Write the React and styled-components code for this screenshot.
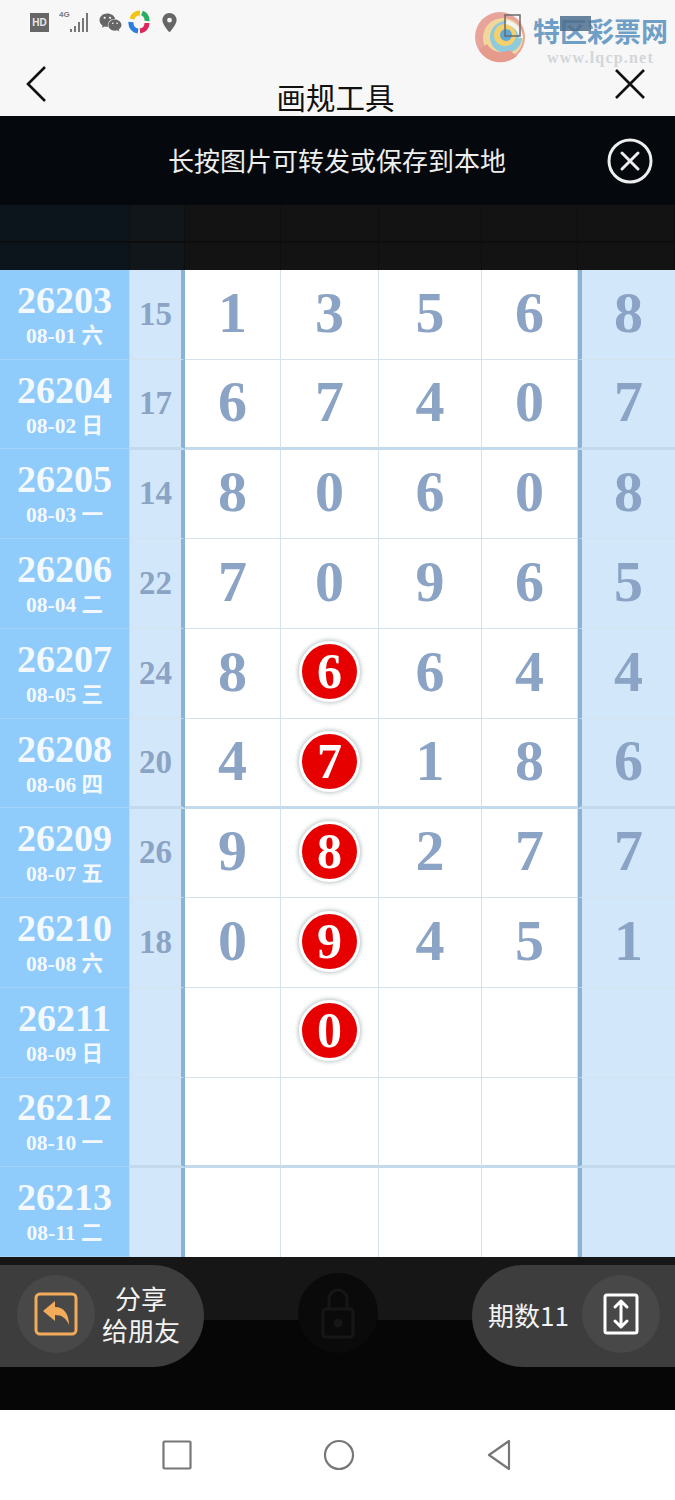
import styled, { createGlobalStyle } from "styled-components";
import { FaWeixin } from "react-icons/fa";
import { FaLocationDot } from "react-icons/fa6";

const GlobalStyle = createGlobalStyle`
  body {
    margin: 0;
    background: #fff;
    font-family: "Noto Sans CJK SC", "Noto Sans", sans-serif;
  }
`;

const rows = [
  { id: "26203", date: "08-01 六", sum: 15, nums: [1, 3, 5, 6, 8] },
  { id: "26204", date: "08-02 日", sum: 17, nums: [6, 7, 4, 0, 7], thick: true },
  { id: "26205", date: "08-03 一", sum: 14, nums: [8, 0, 6, 0, 8] },
  { id: "26206", date: "08-04 二", sum: 22, nums: [7, 0, 9, 6, 5] },
  { id: "26207", date: "08-05 三", sum: 24, nums: [8, 6, 6, 4, 4], hit: true },
  { id: "26208", date: "08-06 四", sum: 20, nums: [4, 7, 1, 8, 6], hit: true, thick: true },
  { id: "26209", date: "08-07 五", sum: 26, nums: [9, 8, 2, 7, 7], hit: true },
  { id: "26210", date: "08-08 六", sum: 18, nums: [0, 9, 4, 5, 1], hit: true },
  { id: "26211", date: "08-09 日", nums: ["", 0, "", "", ""], hit: true },
  { id: "26212", date: "08-10 一", nums: ["", "", "", "", ""], thick: true },
  { id: "26213", date: "08-11 二", nums: ["", "", "", "", ""], last: true },
];

const COLUMNS = "130px 55px 96px 98px 103px 96px 97px";

const Page = styled.div`
  position: relative;
  width: 675px;
  height: 1500px;
  display: flex;
  flex-direction: column;
  overflow: hidden;
`;

const TopBar = styled.header`
  height: 116px;
  background: #f7f7f7;
  display: flex;
  flex-direction: column;
`;

const StatusBar = styled.div`
  height: 44px;
  padding-left: 30px;
  display: flex;
  align-items: center;
  gap: 10px;
  color: #666;
`;

const HdBadge = styled.span`
  width: 19px;
  height: 19px;
  background: #666;
  color: #e8e8e8;
  font: 700 10px "Liberation Sans", sans-serif;
  display: flex;
  align-items: center;
  justify-content: center;
`;

const NavRow = styled.div`
  flex: 1;
  padding: 0 29px 0 25px;
  display: grid;
  grid-template-columns: 1fr auto 1fr;
  align-items: start;
`;

const BackIcon = styled.svg`
  width: 22px;
  height: 36px;
  margin-top: 22px;
`;

const CloseIcon = styled.svg`
  width: 32px;
  height: 32px;
  margin-top: 24px;
  justify-self: end;
`;

const Title = styled.h1`
  margin: 34px 0 0;
  font-size: 29.5px;
  line-height: 36px;
  font-weight: 400;
  color: #111;
`;

const AppIconSvg = styled.svg`
  width: 22px;
  height: 24px;
  margin-left: -4px;
`;

const Watermark = styled.div`
  position: absolute;
  top: 10px;
  left: 473px;
  display: flex;
  align-items: flex-start;
  gap: 6px;
`;

const WatermarkText = styled.div`
  position: relative;
  margin-top: 4px;
  display: flex;
  flex-direction: column;
  align-items: center;
`;

const WatermarkName = styled.span`
  position: relative;
  font-size: 27px;
  line-height: 34px;
  font-weight: 700;
  color: #6f9fc6;
  white-space: nowrap;
`;

const FaintBattery = styled.span`
  position: absolute;
  top: 2px;
  left: 27px;
  width: 31px;
  height: 15px;
  background: #4d6f8e;
  opacity: 0.85;
`;

const WatermarkUrl = styled.span`
  font: 700 16px/20px "Liberation Serif", serif;
  letter-spacing: 1.2px;
  color: #d2d6da;
`;

const TipBar = styled.div`
  height: 89px;
  background: #05090d;
  padding: 0 22px 0 168px;
  display: flex;
  align-items: center;
  justify-content: space-between;
  color: #eee;
`;

const TipText = styled.span`
  font-size: 26px;
  white-space: nowrap;
  margin-top: -2px;
`;

const DimHeader = styled.div`
  height: 65px;
  display: grid;
  grid-template-columns: ${COLUMNS};
`;

const DimCell = styled.div`
  background: ${(p) => p.$bg || "#131313"};
  border-right: 1px solid #0e0e0e;
  background-image: linear-gradient(transparent 36px, #0d0d0d 36px, #0d0d0d 38px, transparent 38px);
`;

const Table = styled.div`
  height: 987px;
  display: flex;
  flex-direction: column;
  background: #fff;
`;

const Row = styled.div`
  flex: 1;
  min-height: 0;
  display: grid;
  grid-template-columns: ${COLUMNS};
  position: ${(p) => (p.$thick ? "relative" : "static")};
  z-index: ${(p) => (p.$thick ? 1 : "auto")};
`;

const DateCell = styled.div`
  background: #8fcbfb;
  border-right: 1px solid #b9dcf8;
  border-bottom: 1px solid #a4d4fa;
  color: #f4f9fe;
  display: flex;
  flex-direction: column;
  align-items: center;
  justify-content: center;
`;

const Issue = styled.span`
  font: 700 38px/38px "Liberation Serif", serif;
`;

const DateText = styled.span`
  font: 700 21.5px/24px "Liberation Serif", "Noto Sans CJK SC", serif;
  margin-top: 5px;
`;

const Cell = styled.div`
  display: flex;
  align-items: center;
  justify-content: center;
  box-sizing: border-box;
  padding-bottom: 3px;
  color: #8ba3c4;
  font: 700 58px/1 "Liberation Serif", serif;
  background: ${(p) => (p.$shade ? "#d2e7fa" : "#fff")};
  border-bottom: ${(p) => (p.$last ? "0" : p.$thick ? "2px solid #c3d9ec" : "1px solid #d4e2ee")};
  box-shadow: ${(p) => (p.$thick ? "0 1px 0 #c3d9ec" : "none")};
  border-right: ${(p) => (p.$ruleRight ? "4px solid #8ab2d4" : p.$shade ? "0" : "1px solid #d4e2ee")};
  border-left: ${(p) => (p.$ruleLeft ? "4px solid #8ab2d4" : "0")};
`;

const SumCell = styled(Cell)`
  font-size: 33px;
  padding-bottom: 0;
`;

const Ball = styled.span`
  width: 55px;
  height: 55px;
  border-radius: 50%;
  background: #e60000;
  color: #fff;
  border: 3px solid #fff;
  box-shadow: 0 0 4px 1px rgba(70, 100, 100, 0.4);
  display: flex;
  align-items: center;
  justify-content: center;
  font-size: 50px;
  line-height: 55px;
`;

const BottomBar = styled.div`
  height: 153px;
  padding-top: 8px;
  box-sizing: border-box;
  background: linear-gradient(#161616 63px, #060606 63px);
  display: flex;
  justify-content: space-between;
  align-items: flex-start;
`;

const Pill = styled.div`
  height: 102px;
  width: ${(p) => p.$width}px;
  box-sizing: border-box;
  background: #3d3d3d;
  color: #f2f2f2;
  display: flex;
  align-items: center;
  border-radius: ${(p) => (p.$side === "left" ? "0 51px 51px 0" : "51px 0 0 51px")};
  padding: 0 0 4px ${(p) => (p.$side === "left" ? "17px" : "16px")};
`;

const IconCircle = styled.div`
  width: 78px;
  height: 78px;
  border-radius: 50%;
  background: #484848;
  flex: none;
  display: flex;
  align-items: center;
  justify-content: center;
`;

const ShareLabel = styled.div`
  margin-left: 7px;
  font-size: 26px;
  line-height: 32px;
  text-align: center;
`;

const CountLabel = styled.div`
  font-size: 26px;
  margin-right: 13px;
  white-space: nowrap;
`;

const LockCircle = styled.div`
  width: 80px;
  height: 80px;
  margin-top: 8px;
  border-radius: 50%;
  background: #0a0a0a;
  display: flex;
  align-items: center;
  justify-content: center;
`;

const NavBar = styled.nav`
  height: 90px;
  background: #fff;
  display: flex;
  align-items: center;
  justify-content: center;
  gap: 131px;
  padding-right: 2px;
`;

function Logo() {
  return (
    <svg width="54" height="54" viewBox="0 0 54 54">
      <circle cx="27" cy="27" r="25" fill="#e8a49a" />
      <circle cx="30" cy="28" r="20" fill="#f1d79c" />
      <circle cx="33" cy="27" r="16" fill="#8ecbdc" />
      <circle cx="32" cy="25" r="11" fill="#f4cf6c" />
      <circle cx="33" cy="25" r="6" fill="#5fa8d6" />
      <path d="M6 40 A25 25 0 0 0 44 46 L36 40 A16 16 0 0 1 14 34 Z" fill="#e59a8c" />
      <path d="M34 10 A20 20 0 0 1 50 28 L46 28 A16 16 0 0 0 32 14 Z" fill="#f4f4f4" />
      <rect x="32" y="5" width="15" height="21" fill="none" stroke="#6b6b6b" strokeWidth="1.5" />
    </svg>
  );
}

function SignalIcon() {
  return (
    <svg width="30" height="24" viewBox="0 0 30 24" fill="#777">
      <text x="0" y="7" fontSize="8" fontWeight="700" fontFamily="Liberation Sans, sans-serif">4G</text>
      <rect x="11" y="19" width="2" height="3" />
      <rect x="15" y="16" width="2" height="6" />
      <rect x="19" y="12" width="2" height="10" />
      <rect x="23" y="8" width="2" height="14" />
      <rect x="27" y="3" width="2" height="19" />
    </svg>
  );
}

function AppIcon() {
  return (
    <AppIconSvg viewBox="0 0 22 24" fill="none" strokeWidth="5">
      <path d="M4 9 A8 8 0 0 1 12 3" stroke="#f2c511" />
      <path d="M14 3 A8 8 0 0 1 19 11" stroke="#27ae60" />
      <path d="M19 13 A8 8 0 0 1 12 21" stroke="#e0245e" />
      <path d="M10 21 A8 8 0 0 1 3 12" stroke="#2a7de1" />
    </AppIconSvg>
  );
}

function ShareIcon() {
  return (
    <svg width="44" height="44" viewBox="0 0 44 44">
      <rect x="2" y="2" width="40" height="40" rx="4" fill="none" stroke="#f2ab5b" strokeWidth="3" />
      <path d="M9 19 L21 9 V15 C30 15 35 22 35 33 C32 26 28 23 21 23 V29 Z" fill="#f2ab5b" />
    </svg>
  );
}

function ExpandIcon() {
  return (
    <svg width="36" height="42" viewBox="0 0 36 42" fill="none" stroke="#fff" strokeWidth="3">
      <rect x="2" y="2" width="32" height="38" rx="2" />
      <path d="M18 9 V33 M12 14 L18 8 L24 14 M12 28 L18 34 L24 28" strokeLinecap="round" strokeLinejoin="round" />
    </svg>
  );
}

function LockIcon() {
  return (
    <svg width="36" height="56" viewBox="0 0 36 56" fill="none" stroke="#161616" strokeWidth="3">
      <rect x="3" y="24" width="30" height="28" rx="3" />
      <path d="M9 24 V14 A9 9 0 0 1 27 14 V24" />
      <circle cx="18" cy="38" r="3" fill="#161616" />
    </svg>
  );
}

function Cells({ row }) {
  return row.nums.map((n, i) => {
    const isBall = row.hit && i === 1;
    return (
      <Cell key={i} $thick={row.thick} $last={row.last} $shade={i === 4} $ruleLeft={i === 4}>
        {isBall ? <Ball>{n}</Ball> : n}
      </Cell>
    );
  });
}

export default function App() {
  return (
    <Page>
      <GlobalStyle />

      <TopBar>
        <StatusBar>
          <HdBadge>HD</HdBadge>
          <SignalIcon />
          <FaWeixin size={23} />
          <AppIcon />
          <FaLocationDot size={19} />
        </StatusBar>
        <NavRow>
          <BackIcon viewBox="0 0 22 36" fill="none" stroke="#111" strokeWidth="2.6">
            <path d="M20 1 L3 18 L20 35" />
          </BackIcon>
          <Title>画规工具</Title>
          <CloseIcon viewBox="0 0 32 32" fill="none" stroke="#111" strokeWidth="2.6">
            <path d="M2 2 L30 30 M30 2 L2 30" />
          </CloseIcon>
        </NavRow>
      </TopBar>

      <Watermark>
        <Logo />
        <WatermarkText>
          <WatermarkName>
            <FaintBattery />
            特区彩票网
          </WatermarkName>
          <WatermarkUrl>www.lqcp.net</WatermarkUrl>
        </WatermarkText>
      </Watermark>

      <TipBar>
        <TipText>长按图片可转发或保存到本地</TipText>
        <svg width="46" height="46" viewBox="0 0 46 46" fill="none" stroke="#eee" strokeWidth="3">
          <circle cx="23" cy="23" r="21" />
          <path d="M15 15 L31 31 M31 15 L15 31" strokeLinecap="round" />
        </svg>
      </TipBar>

      <DimHeader>
        <DimCell $bg="#0c141c" />
        <DimCell $bg="#11161b" />
        <DimCell />
        <DimCell />
        <DimCell />
        <DimCell />
        <DimCell />
      </DimHeader>

      <Table>
        {rows.map((row) => (
          <Row key={row.id} $thick={row.thick}>
            <DateCell>
              <Issue>{row.id}</Issue>
              <DateText>{row.date}</DateText>
            </DateCell>
            <SumCell $shade $ruleRight $thick={row.thick} $last={row.last}>
              {row.sum}
            </SumCell>
            <Cells row={row} />
          </Row>
        ))}
      </Table>

      <BottomBar>
        <Pill $side="left" $width={204}>
          <IconCircle>
            <ShareIcon />
          </IconCircle>
          <ShareLabel>
            分享
            <br />
            给朋友
          </ShareLabel>
        </Pill>
        <LockCircle>
          <LockIcon />
        </LockCircle>
        <Pill $side="right" $width={203}>
          <CountLabel>期数11</CountLabel>
          <IconCircle>
            <ExpandIcon />
          </IconCircle>
        </Pill>
      </BottomBar>

      <NavBar>
        <svg width="30" height="30" viewBox="0 0 30 30" fill="none" stroke="#777" strokeWidth="2.2">
          <rect x="1.5" y="1.5" width="27" height="27" rx="1" />
        </svg>
        <svg width="32" height="32" viewBox="0 0 32 32" fill="none" stroke="#777" strokeWidth="2.2">
          <circle cx="16" cy="16" r="14" />
        </svg>
        <svg width="26" height="32" viewBox="0 0 26 32" fill="none" stroke="#777" strokeWidth="2.2" strokeLinejoin="round">
          <path d="M23 2 V30 L3 16 Z" />
        </svg>
      </NavBar>
    </Page>
  );
}
